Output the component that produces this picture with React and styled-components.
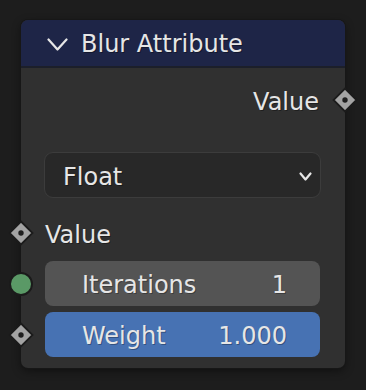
import React from 'react';
import styled, { createGlobalStyle } from 'styled-components';

const Global = createGlobalStyle`
  html, body {
    margin: 0;
    padding: 0;
    background: #1d1d1d;
  }
  body {
    width: 366px;
    height: 390px;
    overflow: hidden;
    font-family: "DejaVu Sans", "Liberation Sans", sans-serif;
  }
`;

const DiamondSocket = ({ side }) => (
  <SocketHold side={side}>
    <svg width="26" height="26" viewBox="0 0 26 26">
      <polygon points="13,1.5 24.5,13 13,24.5 1.5,13" fill="#a3a3a3" stroke="#1b1b1b" strokeWidth="1.8" />
      <circle cx="13" cy="13" r="2.7" fill="#1e1e1e" />
    </svg>
  </SocketHold>
);

const CircleSocket = ({ side }) => (
  <SocketHold side={side}>
    <svg width="26" height="26" viewBox="0 0 26 26">
      <circle cx="13" cy="13" r="11" fill="#5a9966" stroke="#1b1b1b" strokeWidth="2" />
    </svg>
  </SocketHold>
);

const Chevron = ({ w, h, stroke }) => (
  <svg width={w} height={h} viewBox={`0 0 ${w} ${h}`}>
    <polyline
      points={`1.5,1.5 ${w / 2},${h - 1.5} ${w - 1.5},1.5`}
      fill="none"
      stroke="#e6e6e6"
      strokeWidth={stroke}
      strokeLinecap="round"
      strokeLinejoin="round"
    />
  </svg>
);

const App = () => {
  return (
    <>
      <Global />
      <Node>
        <Header>
          <Chevron w={21} h={13} stroke={2.2} />
          <Title>Blur Attribute</Title>
        </Header>
        <Body>
          <SocketRow align="right">
            <Label>Value</Label>
            <DiamondSocket side="right" />
          </SocketRow>

          <Dropdown>
            <span>Float</span>
            <Chevron w={13} h={9} stroke={2.2} />
          </Dropdown>

          <SocketRow align="left" top={13}>
            <DiamondSocket side="left" />
            <Label>Value</Label>
          </SocketRow>

          <FieldRow top={6}>
            <CircleSocket side="left" />
            <Field tone="#545454">
              <span>Iterations</span>
              <span>1</span>
            </Field>
          </FieldRow>

          <FieldRow top={6}>
            <DiamondSocket side="left" />
            <Field tone="#4772b3">
              <span>Weight</span>
              <span>1.000</span>
            </Field>
          </FieldRow>
        </Body>
      </Node>
    </>
  );
};

export default App;

const Node = styled.div`
  margin: 20px 0 0 21px;
  width: 324px;
  height: 348px;
  background: #303030;
  border-radius: 7px;
  box-shadow: 0 0 0 1px #171717, 0 3px 10px rgba(0, 0, 0, 0.45);
  display: flex;
  flex-direction: column;
`;

const Header = styled.div`
  height: 46px;
  box-sizing: border-box;
  padding: 2px 0 0 26px;
  background: #1e2547;
  border-bottom: 2px solid #1c1f2a;
  border-radius: 7px 7px 0 0;
  display: flex;
  align-items: center;
  gap: 13px;
  box-sizing: content-box;
  height: 44px;

  svg {
    margin-top: 1px;
  }
`;

const Title = styled.div`
  color: #e6e6e6;
  font-size: 24px;
  text-shadow: 1px 1px 0 rgba(0, 0, 0, 0.35);
`;

const Body = styled.div`
  position: relative;
  display: flex;
  flex-direction: column;
  padding: 10px 25px 11px 24px;
`;

const SocketRow = styled.div`
  position: relative;
  height: 44px;
  margin-top: ${(p) => p.top || 0}px;
  display: flex;
  align-items: center;
  justify-content: ${(p) => (p.align === 'right' ? 'flex-end' : 'flex-start')};
  padding-right: ${(p) => (p.align === 'right' ? '1px' : '0')};
`;

const Label = styled.span`
  color: #e6e6e6;
  font-size: 24px;
  padding-top: 4px;
  text-shadow: 1px 1px 0 rgba(0, 0, 0, 0.35);
`;

const SocketHold = styled.div`
  position: absolute;
  top: 50%;
  width: 26px;
  height: 26px;
  margin-top: -13px;
  ${(p) => (p.side === 'right' ? 'right: -38px;' : 'left: -37px;')}
  display: flex;

  svg {
    display: block;
  }
`;

const Dropdown = styled.div`
  margin: 30px -1px 0 -1px;
  height: 46px;
  box-sizing: border-box;
  background: #282828;
  border: 1px solid #3c3c3c;
  border-radius: 9px;
  display: flex;
  align-items: center;
  justify-content: space-between;
  padding: 3px 8px 0 18px;
  color: #e6e6e6;
  font-size: 24px;
  text-shadow: 1px 1px 0 rgba(0, 0, 0, 0.35);
`;

const FieldRow = styled.div`
  position: relative;
  margin-top: ${(p) => p.top || 0}px;
`;

const Field = styled.div`
  height: 45px;
  box-sizing: border-box;
  background: ${(p) => p.tone};
  border-radius: 8px;
  display: flex;
  align-items: center;
  justify-content: space-between;
  padding: 3px 33px 0 37px;
  color: #e6e6e6;
  font-size: 24px;
  text-shadow: 1px 1px 0 rgba(0, 0, 0, 0.3);
`;
